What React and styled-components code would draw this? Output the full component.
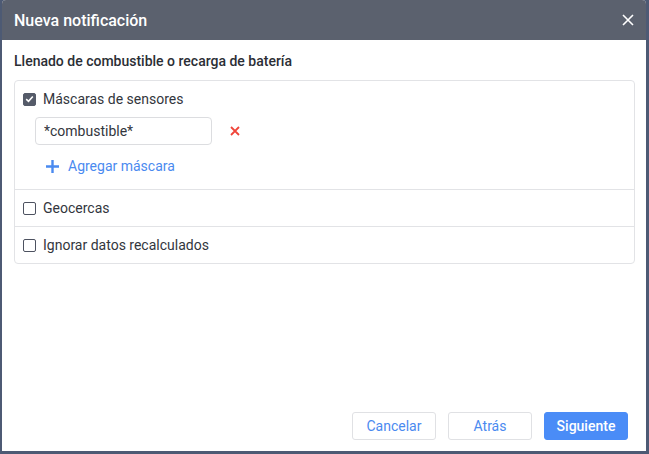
import React, { useState } from 'react';
import styled, { createGlobalStyle } from 'styled-components';

const Global = createGlobalStyle`
  html, body { margin: 0; padding: 0; }
  body {
    background: #4d5a74;
    font-family: Roboto, "Liberation Sans", sans-serif;
    color: #2d3038;
  }
`;

const Backdrop = styled.div`
  width: 649px;
  height: 454px;
  padding: 0 3px 3px 2px;
  box-sizing: border-box;
`;

const Dialog = styled.div`
  height: 100%;
  background: #fff;
  border-radius: 4px 4px 0 0;
  display: flex;
  flex-direction: column;
  overflow: hidden;
`;

const Header = styled.div`
  height: 40px;
  flex: none;
  background: #5b616e;
  display: flex;
  align-items: center;
  justify-content: space-between;
  padding: 0 12px 0 12px;
`;

const Title = styled.div`
  color: #fff;
  font-size: 16px;
  font-weight: 500;
`;

const Close = styled.button`
  border: 0;
  background: none;
  padding: 0;
  display: flex;
  color: #fff;
  cursor: pointer;
`;

const Body = styled.div`
  flex: 1;
  padding: 13px 11px 0 12px;
`;

const Subtitle = styled.div`
  font-size: 14px;
  font-weight: 500;
  color: #2b2e35;
  margin-bottom: 11px;
`;

const Panel = styled.div`
  border: 1px solid #e2e3e6;
  border-radius: 4px;
`;

const Section = styled.div`
  padding: 0 8px;
  & + & { border-top: 1px solid #e2e3e6; }
`;

const Row = styled.label`
  height: 36px;
  display: flex;
  align-items: center;
  gap: 7px;
  font-size: 14px;
  color: #33363d;
  cursor: pointer;
`;

const Box = styled.span`
  width: 13px;
  height: 13px;
  box-sizing: border-box;
  border-radius: 2px;
  border: 1.5px solid ${p => (p.$on ? '#555b69' : '#4d5260')};
  background: ${p => (p.$on ? '#555b69' : '#fff')};
  display: flex;
  align-items: center;
  justify-content: center;
  flex: none;
`;

const Masks = styled.div`
  padding: 0 0 15px 12px;
`;

const MaskLine = styled.div`
  display: flex;
  align-items: center;
  gap: 18px;
`;

const Input = styled.input`
  width: 177px;
  height: 28px;
  box-sizing: border-box;
  border: 1px solid #dcdde0;
  border-radius: 4px;
  padding: 0 8px;
  font-family: inherit;
  font-size: 14px;
  color: #33363d;
  outline: none;
`;

const Remove = styled.button`
  border: 0;
  background: none;
  padding: 0;
  display: flex;
  cursor: pointer;
`;

const AddLink = styled.button`
  border: 0;
  background: none;
  padding: 0 0 0 11px;
  margin-top: 13px;
  display: flex;
  align-items: center;
  gap: 9px;
  font-family: inherit;
  font-size: 14px;
  color: #4a8af0;
  cursor: pointer;
`;

const Footer = styled.div`
  display: flex;
  justify-content: flex-end;
  gap: 12px;
  padding: 0 18px 11px 0;
`;

const Button = styled.button`
  width: 84px;
  height: 28px;
  box-sizing: border-box;
  border-radius: 3px;
  border: 1px solid ${p => (p.$primary ? '#4a8cf7' : '#e0e1e4')};
  background: ${p => (p.$primary ? '#4a8cf7' : '#fff')};
  color: ${p => (p.$primary ? '#fff' : '#4a8af0')};
  font-family: inherit;
  font-size: 14px;
  font-weight: ${p => (p.$primary ? 500 : 400)};
  cursor: pointer;
`;

const Check = ({ on }) => (
  <Box $on={on}>
    {on && (
      <svg width="9" height="8" viewBox="0 0 9 8">
        <path d="M1.2 4.2 L3.5 6.3 L7.8 1.5" fill="none" stroke="#fff" strokeWidth="1.6" />
      </svg>
    )}
  </Box>
);

export default function App() {
  const [flags, setFlags] = useState({ masks: true, geo: false, ignore: false });
  const toggle = k => setFlags(f => ({ ...f, [k]: !f[k] }));

  return (
    <>
      <Global />
      <Backdrop>
        <Dialog>
          <Header>
            <Title>Nueva notificación</Title>
            <Close aria-label="Cerrar">
              <svg width="12" height="12" viewBox="0 0 12 12">
                <path d="M1 1 L11 11 M11 1 L1 11" stroke="#fff" strokeWidth="1.6" />
              </svg>
            </Close>
          </Header>
          <Body>
            <Subtitle>Llenado de combustible o recarga de batería</Subtitle>
            <Panel>
              <Section>
                <Row onClick={() => toggle('masks')}>
                  <Check on={flags.masks} />
                  Máscaras de sensores
                </Row>
                <Masks>
                  <MaskLine>
                    <Input defaultValue="*combustible*" />
                    <Remove aria-label="Eliminar">
                      <svg width="10" height="10" viewBox="0 0 10 10">
                        <path d="M1 1 L9 9 M9 1 L1 9" stroke="#f0453a" strokeWidth="1.8" />
                      </svg>
                    </Remove>
                  </MaskLine>
                  <AddLink>
                    <svg width="13" height="13" viewBox="0 0 13 13">
                      <path d="M6.5 0 V13 M0 6.5 H13" stroke="#4a8af0" strokeWidth="2.4" />
                    </svg>
                    Agregar máscara
                  </AddLink>
                </Masks>
              </Section>
              <Section>
                <Row onClick={() => toggle('geo')}>
                  <Check on={flags.geo} />
                  Geocercas
                </Row>
              </Section>
              <Section>
                <Row onClick={() => toggle('ignore')}>
                  <Check on={flags.ignore} />
                  Ignorar datos recalculados
                </Row>
              </Section>
            </Panel>
          </Body>
          <Footer>
            <Button>Cancelar</Button>
            <Button>Atrás</Button>
            <Button $primary>Siguiente</Button>
          </Footer>
        </Dialog>
      </Backdrop>
    </>
  );
}
